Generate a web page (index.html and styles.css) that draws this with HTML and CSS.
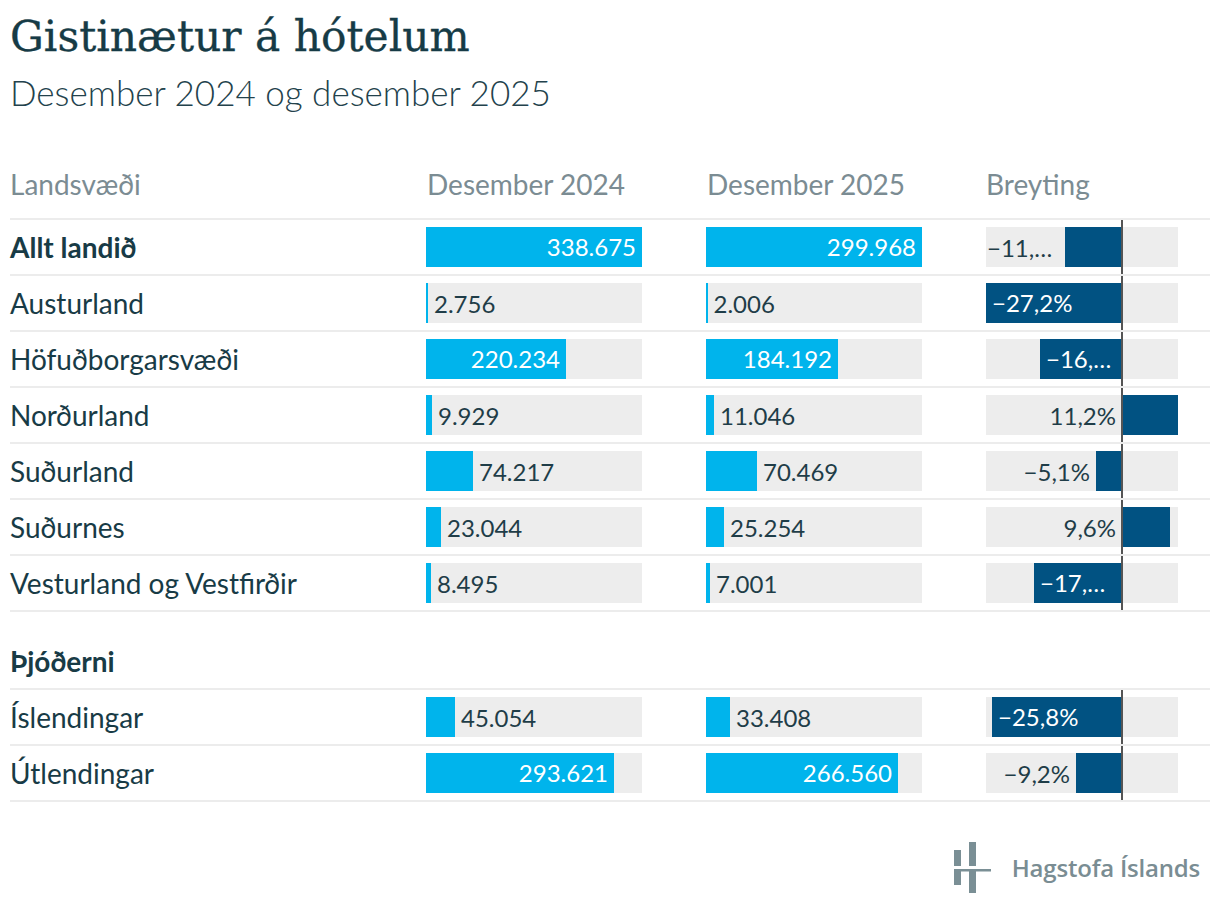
FILE: index.html
```html
<!DOCTYPE html>
<html lang="is">
<head>
<meta charset="utf-8">
<title>Gistinætur á hótelum</title>
<link rel="stylesheet" href="styles.css">
</head>
<body>
<div class="page">
  <header class="head">
    <h1 class="title">Gistinætur á hótelum</h1>
    <p class="subtitle">Desember 2024 og desember 2025</p>
  </header>

  <div class="table">
    <div class="row thead">
      <div class="c-label">Landsvæði</div>
      <div class="c-num">Desember 2024</div>
      <div class="c-num">Desember 2025</div>
      <div class="c-head">Breyting</div>
    </div>

    <div class="row total">
      <div class="c-label">Allt landið</div>
      <div class="c-num"><div class="track"><div class="bar in" style="width:216px">338.675</div></div></div>
      <div class="c-num"><div class="track"><div class="bar in" style="width:216px">299.968</div></div></div>
      <div class="c-chg"><div class="ctrack"><div class="neg"><span class="lbl">−11,…</span><div class="nbar" style="width:57px"></div></div><div class="pos"></div></div></div>
    </div>

    <div class="row">
      <div class="c-label">Austurland</div>
      <div class="c-num"><div class="track"><div class="bar" style="width:2px"></div><span class="val">2.756</span></div></div>
      <div class="c-num"><div class="track"><div class="bar" style="width:1.5px"></div><span class="val">2.006</span></div></div>
      <div class="c-chg"><div class="ctrack"><div class="neg"><div class="nbar inl" style="width:136px">−27,2%</div></div><div class="pos"></div></div></div>
    </div>

    <div class="row">
      <div class="c-label">Höfuðborgarsvæði</div>
      <div class="c-num"><div class="track"><div class="bar in" style="width:140px">220.234</div></div></div>
      <div class="c-num"><div class="track"><div class="bar in" style="width:132px">184.192</div></div></div>
      <div class="c-chg"><div class="ctrack"><div class="neg"><div class="nbar inl" style="width:82px">−16,…</div></div><div class="pos"></div></div></div>
    </div>

    <div class="row">
      <div class="c-label">Norðurland</div>
      <div class="c-num"><div class="track"><div class="bar" style="width:6px"></div><span class="val">9.929</span></div></div>
      <div class="c-num"><div class="track"><div class="bar" style="width:8px"></div><span class="val">11.046</span></div></div>
      <div class="c-chg"><div class="ctrack"><div class="neg"><span class="lbl">11,2%</span></div><div class="pos"><div class="pbar" style="width:56px"></div></div></div></div>
    </div>

    <div class="row">
      <div class="c-label">Suðurland</div>
      <div class="c-num"><div class="track"><div class="bar" style="width:47px"></div><span class="val">74.217</span></div></div>
      <div class="c-num"><div class="track"><div class="bar" style="width:51px"></div><span class="val">70.469</span></div></div>
      <div class="c-chg"><div class="ctrack"><div class="neg"><span class="lbl">−5,1%</span><div class="nbar" style="width:26px"></div></div><div class="pos"></div></div></div>
    </div>

    <div class="row">
      <div class="c-label">Suðurnes</div>
      <div class="c-num"><div class="track"><div class="bar" style="width:15px"></div><span class="val">23.044</span></div></div>
      <div class="c-num"><div class="track"><div class="bar" style="width:18px"></div><span class="val">25.254</span></div></div>
      <div class="c-chg"><div class="ctrack"><div class="neg"><span class="lbl">9,6%</span></div><div class="pos"><div class="pbar" style="width:48px"></div></div></div></div>
    </div>

    <div class="row">
      <div class="c-label">Vesturland og Vestfirðir</div>
      <div class="c-num"><div class="track"><div class="bar" style="width:5px"></div><span class="val">8.495</span></div></div>
      <div class="c-num"><div class="track"><div class="bar" style="width:4px"></div><span class="val">7.001</span></div></div>
      <div class="c-chg"><div class="ctrack"><div class="neg"><div class="nbar inl" style="width:88px">−17,…</div></div><div class="pos"></div></div></div>
    </div>

    <div class="section">Þjóðerni</div>

    <div class="row">
      <div class="c-label">Íslendingar</div>
      <div class="c-num"><div class="track"><div class="bar" style="width:29px"></div><span class="val">45.054</span></div></div>
      <div class="c-num"><div class="track"><div class="bar" style="width:24px"></div><span class="val">33.408</span></div></div>
      <div class="c-chg"><div class="ctrack"><div class="neg"><div class="nbar inl" style="width:130px">−25,8%</div></div><div class="pos"></div></div></div>
    </div>

    <div class="row">
      <div class="c-label">Útlendingar</div>
      <div class="c-num"><div class="track"><div class="bar in" style="width:188px">293.621</div></div></div>
      <div class="c-num"><div class="track"><div class="bar in" style="width:192px">266.560</div></div></div>
      <div class="c-chg"><div class="ctrack"><div class="neg"><span class="lbl">−9,2%</span><div class="nbar" style="width:46px"></div></div><div class="pos"></div></div></div>
    </div>
  </div>

  <footer class="foot">
    <div class="logo">
      <svg class="mark" width="37" height="51" viewBox="0 0 37 51" aria-hidden="true">
        <g fill="#7a8f95">
          <rect x="0" y="8" width="7" height="16"/>
          <rect x="0" y="27" width="37" height="2.5"/>
          <rect x="0" y="29" width="7" height="14"/>
          <rect x="15" y="0" width="7" height="24"/>
          <rect x="15" y="29" width="7" height="22"/>
        </g>
      </svg>
      <span class="logo-text">Hagstofa Íslands</span>
    </div>
  </footer>
</div>
</body>
</html>
```

FILE: styles.css
```css
* { box-sizing: border-box; }

html, body {
  margin: 0;
  padding: 0;
  background: #ffffff;
}

body {
  font-family: Lato, "Noto Sans", sans-serif;
  color: #183b46;
}

.page {
  width: 1220px;
  height: 918px;
  padding: 0 10px;
}

.head {
  padding-top: 12px;
}

.title {
  margin: 0;
  font-family: "DejaVu Serif", "Liberation Serif", serif;
  font-weight: 400;
  font-size: 42.4px;
  line-height: 50px;
  color: #163b46;
  -webkit-text-stroke: 0.3px #163b46;
}

.subtitle {
  margin: 10px 0 0;
  font-family: Lato, sans-serif;
  font-weight: 300;
  font-size: 35px;
  line-height: 40px;
  color: #23424c;
}

.table {
  margin-top: 55px;
  width: 1200px;
}

.row {
  display: grid;
  grid-template-columns: 416px 280px 280px 224px;
  height: 56px;
  border-bottom: 2px solid #ececec;
  align-items: center;
  font-size: 28px;
}

.thead {
  height: 53px;
  align-items: start;
  color: #7b8c93;
  font-size: 28px;
  line-height: 34px;
}

.thead .c-num {
  padding-left: 1px;
}

.total .c-label {
  font-weight: 700;
}

.c-label {
  white-space: nowrap;
}

.track {
  width: 216px;
  height: 40px;
  background: #ededed;
  display: flex;
  align-items: center;
}

.bar {
  height: 40px;
  background: #00b4ec;
  flex: none;
}

.bar.in {
  color: #ffffff;
  text-align: right;
  padding-right: 6px;
  font-size: 24px;
  line-height: 40px;
}

.val {
  padding-left: 6px;
  font-size: 24px;
  color: #1f3d48;
}

.c-chg {
  align-self: stretch;
  display: flex;
  align-items: center;
  position: relative;
}

.c-chg::after {
  content: "";
  position: absolute;
  left: 135px;
  top: 0;
  bottom: 0;
  width: 2px;
  background: #555555;
}

.ctrack {
  width: 192px;
  height: 40px;
  background: #ededed;
  display: flex;
}

.neg {
  width: 136px;
  display: flex;
  justify-content: flex-end;
  align-items: center;
}

.pos {
  width: 56px;
  display: flex;
  align-items: center;
}

.nbar,
.pbar {
  height: 40px;
  background: #015282;
  flex: none;
}

.nbar.inl {
  color: #ffffff;
  padding-left: 6px;
  font-size: 24px;
  line-height: 40px;
  white-space: nowrap;
  overflow: hidden;
}

.lbl {
  font-size: 24px;
  padding-right: 6px;
  white-space: nowrap;
  color: #1f3d48;
  flex: 1 1 auto;
  text-align: right;
}

.row.total .lbl {
  text-align: left;
  padding-left: 1px;
}

.section {
  height: 78px;
  display: flex;
  align-items: flex-end;
  padding-bottom: 10px;
  font-size: 28px;
  font-weight: 700;
  border-bottom: 2px solid #ececec;
}

.foot {
  display: flex;
  justify-content: flex-end;
  padding-top: 40px;
  padding-right: 10px;
}

.logo {
  display: flex;
  align-items: center;
  gap: 21px;
}

.logo-text {
  font-family: "Open Sans", sans-serif;
  font-weight: 600;
  font-size: 24px;
  color: #7a8d93;
  letter-spacing: -0.2px;
}
```
